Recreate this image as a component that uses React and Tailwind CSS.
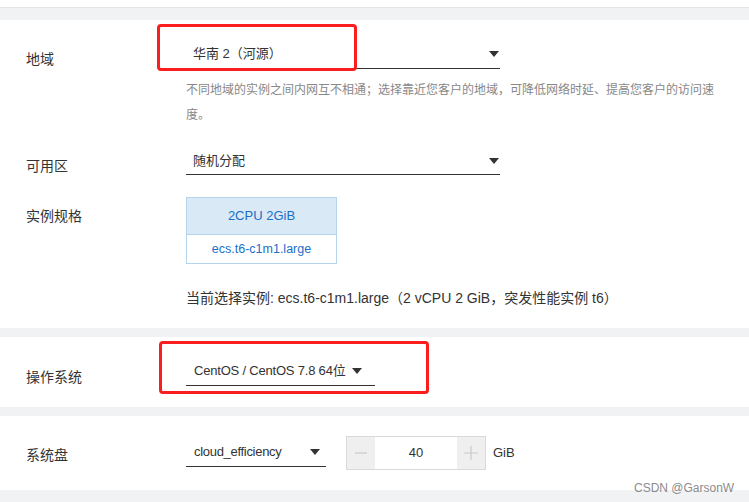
import React from 'react';

const Caret = () => (
  <svg width="10" height="6" viewBox="0 0 10 6" className="shrink-0">
    <path d="M0 0h10L5 6z" fill="#333" />
  </svg>
);

function Label({ children, pt = 'pt-[9px]' }) {
  return (
    <div className={`w-[186px] shrink-0 pl-[26px] ${pt} text-[14px] leading-[20px] text-[#333]`}>{children}</div>
  );
}

function Select({ value, className = '' }) {
  return (
    <div className={`flex h-[29px] items-center justify-between border-b border-[#333] pl-[7px] text-[13px] text-[#333] ${className}`}>
      <span className="whitespace-nowrap">{value}</span>
      <Caret />
    </div>
  );
}

function Mark({ className }) {
  return <div className={`pointer-events-none absolute rounded-[4px] border-[3px] border-[#fa1e1e] ${className}`} />;
}

export default function App() {
  return (
    <div className="relative h-[502px] w-full overflow-hidden bg-[#f1f2f4] font-['Liberation_Sans','Noto_Sans_CJK_SC',sans-serif]">
      <div className="h-[8px] border-b border-[#e3e4e6] bg-white" />
      <div className="h-[12px]" />

      {/* region / zone / spec */}
      <section className="relative bg-white pt-[20px] pb-[20px]">
        <Mark className="left-[157px] top-[4px] h-[47px] w-[200px]" />
        <div className="flex">
          <Label>地域</Label>
          <div className="w-[314px]">
            <Select value="华南 2（河源）" className="pr-[1px]" />
          </div>
        </div>
        <div className="flex">
          <div className="w-[186px] shrink-0" />
          <p className="mt-[9px] w-[535px] text-[12px] leading-[25px] text-[#888]">
            不同地域的实例之间内网互不相通；选择靠近您客户的地域，可降低网络时延、提高您客户的访问速度。
          </p>
        </div>

        <div className="mt-[19px] flex">
          <Label>可用区</Label>
          <div className="w-[314px]">
            <Select value="随机分配" className="!h-[28px] pr-[1px]" />
          </div>
        </div>

        <div className="mt-[21px] flex">
          <Label>实例规格</Label>
          <div className="w-[151px] border border-[#b5d5ef] text-center text-[#1a6fc9]">
            <div className="flex h-[37px] items-center justify-center border-b border-[#b5d5ef] bg-[#d9e9f6] text-[13px]">
              2CPU 2GiB
            </div>
            <div className="flex h-[28px] items-center justify-center text-[12.5px]">ecs.t6-c1m1.large</div>
          </div>
        </div>

        <div className="mt-[24px] flex">
          <div className="w-[186px] shrink-0" />
          <p className="text-[14px] leading-[20px] text-[#333]">
            当前选择实例: ecs.t6-c1m1.large（2 vCPU 2 GiB，突发性能实例 t6）
          </p>
        </div>
      </section>

      <div className="h-[9px]" />

      {/* OS */}
      <section className="relative flex bg-white pt-[20px] pb-[20px]">
        <Mark className="left-[159px] top-[4px] h-[53px] w-[270px]" />
        <Label pt="pt-[10px]">操作系统</Label>
        <Select value="CentOS / CentOS 7.8 64位" className="w-[189px] pl-[8px] pr-[13px] text-[12px] tracking-[-0.2px]" />
      </section>

      <div className="h-[9px]" />

      {/* system disk */}
      <section className="flex bg-white pt-[20px] pb-[20px]">
        <Label>系统盘</Label>
        <Select value="cloud_efficiency" className="mt-[2px] w-[140px] pl-[8px] pr-[6px] text-[12px] tracking-[-0.3px]" />
        <div className="ml-[20px] flex h-[34px] w-[140px] border border-[#d9d9d9]">
          <div className="flex w-[28px] items-center justify-center bg-[#efefef]">
            <svg width="12" height="12" viewBox="0 0 12 12">
              <path d="M0 6h12" stroke="#c9c9c9" strokeWidth="1.2" />
            </svg>
          </div>
          <div className="flex flex-1 items-center justify-center text-[13px] text-[#333]">40</div>
          <div className="flex w-[28px] items-center justify-center bg-[#efefef]">
            <svg width="14" height="14" viewBox="0 0 14 14">
              <path d="M0 7h14M7 0v14" stroke="#c9c9c9" strokeWidth="1.2" />
            </svg>
          </div>
        </div>
        <div className="ml-[7px] flex h-[34px] items-center text-[13px] text-[#333]">GiB</div>
      </section>

      <div className="pointer-events-none absolute left-[634px] top-[480px] text-[12px] leading-[16px] text-[#8c8c8c]">
        CSDN @GarsonW
      </div>
    </div>
  );
}
